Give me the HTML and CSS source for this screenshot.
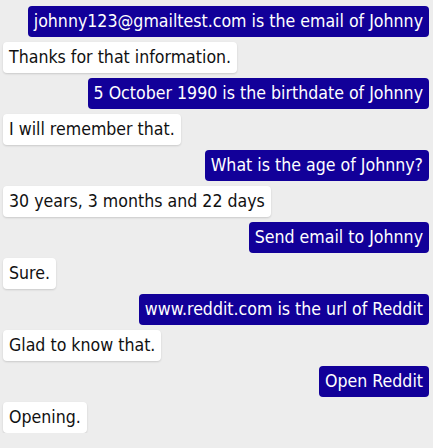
FILE: index.html
```html
<!DOCTYPE html>
<html>
<head>
<meta charset="utf-8">
<link rel="stylesheet" href="styles.css">
</head>
<body>
<div class="chat">
  <div class="msg user">johnny123@gmailtest.com is the email of Johnny</div>
  <div class="msg bot">Thanks for that information.</div>
  <div class="msg user">5 October 1990 is the birthdate of Johnny</div>
  <div class="msg bot">I will remember that.</div>
  <div class="msg user">What is the age of Johnny?</div>
  <div class="msg bot">30 years, 3 months and 22 days</div>
  <div class="msg user">Send email to Johnny</div>
  <div class="msg bot">Sure.</div>
  <div class="msg user">www.reddit.com is the url of Reddit</div>
  <div class="msg bot">Glad to know that.</div>
  <div class="msg user">Open Reddit</div>
  <div class="msg bot">Opening.</div>
</div>
</body>
</html>
```
FILE: styles.css
```css
html, body {
  margin: 0;
  padding: 0;
  background: #ededed;
}
.chat {
  display: flex;
  flex-direction: column;
  gap: 5px;
  padding: 6px 4px 0 3px;
  font-family: "DejaVu Sans Condensed", "DejaVu Sans", sans-serif;
  font-size: 17.6px;
  line-height: 23px;
}
.msg {
  padding: 4px 6px;
  border-radius: 4px;
  white-space: nowrap;
}
.user {
  align-self: flex-end;
  background: #120099;
  color: #ffffff;
}
.bot {
  align-self: flex-start;
  background: #ffffff;
  color: #111111;
  box-shadow: 0 1px 2px rgba(0,0,0,0.15);
}
```
